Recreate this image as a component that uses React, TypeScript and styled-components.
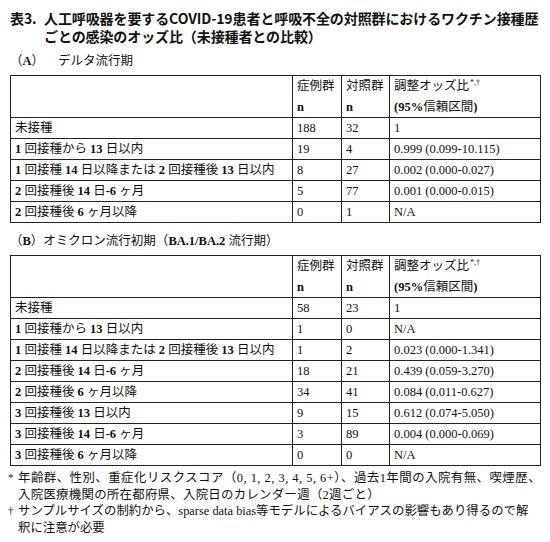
import React from "react";
import styled, { createGlobalStyle } from "styled-components";

const Global = createGlobalStyle`
  html, body { margin: 0; padding: 0; background: #fff; }
  body { font-family: "Liberation Serif", "Noto Sans CJK JP", serif; color: #111; }
`;

const Page = styled.div`
  width: 550px;
  padding: 9px 10px 0 10px;
  box-sizing: border-box;
`;

const Title = styled.div`
  display: flex;
  font-family: "Noto Sans CJK JP", sans-serif;
  font-weight: 700;
  font-size: 14px;
  line-height: 18px;
  letter-spacing: -0.1px;
`;

const TitleNo = styled.div`
  width: 34px;
  flex: none;
`;

const TitleText = styled.div`
  white-space: nowrap;
`;

const Section = styled.div<{ $top: number }>`
  font-size: 12.5px;
  line-height: 16px;
  margin-top: ${(p) => p.$top}px;
  margin-bottom: 6px;
  white-space: nowrap;
`;

const Gap = styled.span`
  display: inline-block;
  width: 14px;
`;

const Table = styled.table`
  width: 530px;
  border-collapse: collapse;
  table-layout: fixed;
  font-size: 12.5px;
`;

const Cell = styled.td<{ $head?: boolean }>`
  border: 1px solid #222;
  padding: 0 4px;
  height: ${(p) => (p.$head ? "41px" : "20px")};
  line-height: ${(p) => (p.$head ? "20.5px" : "15px")};
  vertical-align: ${(p) => (p.$head ? "top" : "middle")};
  white-space: nowrap;
  overflow: visible;
`;

const Sup = styled.sup`
  font-size: 8px;
  line-height: 0;
  vertical-align: 5px;
  margin-left: 1px;
`;

const Notes = styled.div`
  margin-top: 4px;
  margin-left: -2px;
  font-size: 12.4px;
  line-height: 16.5px;
`;

const Note = styled.div`
  display: flex;
`;

const Mark = styled.div`
  width: 10px;
  flex: none;
  font-size: 11px;
  line-height: 14px;
`;

const NoteText = styled.div`
  white-space: nowrap;
`;

const NoteLine = styled.div<{ $spacing?: number }>`
  height: 16.5px;
  letter-spacing: ${(p) => p.$spacing ?? 0}px;
`;

type Row = { label: React.ReactNode; a: string; b: string; or: string };

const B = ({ children }: { children: React.ReactNode }) => <b>{children}</b>;

const rowsA: Row[] = [
  { label: "未接種", a: "188", b: "32", or: "1" },
  { label: <><B>1</B> 回接種から <B>13</B> 日以内</>, a: "19", b: "4", or: "0.999 (0.099-10.115)" },
  { label: <><B>1</B> 回接種 <B>14</B> 日以降または <B>2</B> 回接種後 <B>13</B> 日以内</>, a: "8", b: "27", or: "0.002 (0.000-0.027)" },
  { label: <><B>2</B> 回接種後 <B>14</B> 日<B>-6</B> ヶ月</>, a: "5", b: "77", or: "0.001 (0.000-0.015)" },
  { label: <><B>2</B> 回接種後 <B>6</B> ヶ月以降</>, a: "0", b: "1", or: "N/A" },
];

const rowsB: Row[] = [
  { label: "未接種", a: "58", b: "23", or: "1" },
  { label: <><B>1</B> 回接種から <B>13</B> 日以内</>, a: "1", b: "0", or: "N/A" },
  { label: <><B>1</B> 回接種 <B>14</B> 日以降または <B>2</B> 回接種後 <B>13</B> 日以内</>, a: "1", b: "2", or: "0.023 (0.000-1.341)" },
  { label: <><B>2</B> 回接種後 <B>14</B> 日<B>-6</B> ヶ月</>, a: "18", b: "21", or: "0.439 (0.059-3.270)" },
  { label: <><B>2</B> 回接種後 <B>6</B> ヶ月以降</>, a: "34", b: "41", or: "0.084 (0.011-0.627)" },
  { label: <><B>3</B> 回接種後 <B>13</B> 日以内</>, a: "9", b: "15", or: "0.612 (0.074-5.050)" },
  { label: <><B>3</B> 回接種後 <B>14</B> 日<B>-6</B> ヶ月</>, a: "3", b: "89", or: "0.004 (0.000-0.069)" },
  { label: <><B>3</B> 回接種後 <B>6</B> ヶ月以降</>, a: "0", b: "0", or: "N/A" },
];

const OddsTable = ({ rows }: { rows: Row[] }) => (
  <Table>
    <colgroup>
      <col style={{ width: 282 }} />
      <col style={{ width: 49 }} />
      <col style={{ width: 48 }} />
      <col style={{ width: 151 }} />
    </colgroup>
    <tbody>
      <tr>
        <Cell $head />
        <Cell $head>症例群<br /><b>n</b></Cell>
        <Cell $head>対照群<br /><b>n</b></Cell>
        <Cell $head>
          調整オッズ比<Sup>*,†</Sup>
          <br />
          <b>(95%</b>信頼区間<b>)</b>
        </Cell>
      </tr>
      {rows.map((r, i) => (
        <tr key={i}>
          <Cell>{r.label}</Cell>
          <Cell>{r.a}</Cell>
          <Cell>{r.b}</Cell>
          <Cell>{r.or}</Cell>
        </tr>
      ))}
    </tbody>
  </Table>
);

export default function App() {
  return (
    <>
      <Global />
      <Page>
        <Title>
          <TitleNo>表3.</TitleNo>
          <TitleText>
            人工呼吸器を要するCOVID-19患者と呼吸不全の対照群におけるワクチン接種歴
            <br />
            ごとの感染のオッズ比（未接種者との比較）
          </TitleText>
        </Title>
        <Section $top={8}>
          （<b>A</b>）<Gap />デルタ流行期
        </Section>
        <OddsTable rows={rowsA} />
        <Section $top={10}>
          （<b>B</b>）オミクロン流行初期（<b>BA.1/BA.2</b> 流行期）
        </Section>
        <OddsTable rows={rowsB} />
        <Notes>
          <Note>
            <Mark>*</Mark>
            <NoteText>
              <NoteLine $spacing={0.5}>
                年齢群、性別、重症化リスクスコア（0, 1, 2, 3, 4, 5, 6+）、過去1年間の入院有無、喫煙歴、
              </NoteLine>
              <NoteLine $spacing={0.3}>入院医療機関の所在都府県、入院日のカレンダー週（2週ごと）</NoteLine>
            </NoteText>
          </Note>
          <Note>
            <Mark>†</Mark>
            <NoteText>
              <NoteLine>
                サンプルサイズの制約から、sparse data bias等モデルによるバイアスの影響もあり得るので解
              </NoteLine>
              <NoteLine>釈に注意が必要</NoteLine>
            </NoteText>
          </Note>
        </Notes>
      </Page>
    </>
  );
}
